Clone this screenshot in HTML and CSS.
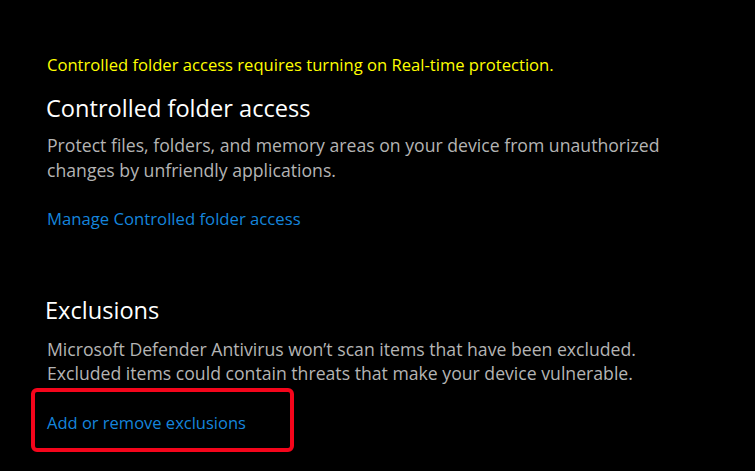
FILE: index.html
```html
<!DOCTYPE html>
<html>
<head>
<meta charset="utf-8">
<link rel="stylesheet" href="styles.css">
</head>
<body>
<main class="page">
  <p class="warning">Controlled folder access requires turning on Real-time protection.</p>
  <section class="section">
    <h2 class="title">Controlled folder access</h2>
    <p class="desc">Protect files, folders, and memory areas on your device from unauthorized<br>changes by unfriendly applications.</p>
    <a class="link first-link" href="#">Manage Controlled folder access</a>
  </section>
  <section class="section excl">
    <h2 class="title">Exclusions</h2>
    <p class="desc">Microsoft Defender Antivirus won’t scan items that have been excluded.<br>Excluded items could contain threats that make your device vulnerable.</p>
    <div class="highlight">
      <a class="link" href="#">Add or remove exclusions</a>
    </div>
  </section>
</main>
</body>
</html>
```
FILE: styles.css
```css
html, body {
  margin: 0;
  padding: 0;
  background: #000;
}
body {
  width: 755px;
  height: 471px;
  overflow: hidden;
  font-family: "Open Sans", "Noto Sans", sans-serif;
}
.page {
  padding: 53px 0 0 47px;
  display: flex;
  flex-direction: column;
}
.warning {
  margin: 0;
  color: #ffff00;
  font-size: 16.6px;
  line-height: 24px;
}
.section {
  display: flex;
  flex-direction: column;
  align-items: flex-start;
}
.title {
  margin: 15px 0 0 -1px;
  color: #fff;
  font-weight: 400;
  font-size: 23.6px;
  line-height: 32px;
}
.desc {
  margin: 9px 0 0 0;
  color: #b4b4b4;
  font-size: 17.65px;
  line-height: 25px;
  white-space: nowrap;
}
.link {
  color: #1585dc;
  text-decoration: none;
  font-size: 16.7px;
  line-height: 24px;
}
.first-link {
  margin-top: 24px;
}
.excl {
  margin-top: 63px;
}
.excl .title {
  margin-top: 0;
  margin-left: -2px;
}
.excl .desc {
  margin-top: 11px;
  line-height: 24px;
}
.highlight {
  margin: 3px 0 0 -16px;
  box-sizing: border-box;
  width: 263px;
  height: 64px;
  border: 4px solid #f5051b;
  border-radius: 6px;
  display: flex;
  align-items: center;
  padding: 6px 0 0 12px;
}
.highlight .link {
  font-size: 16.5px;
}
```
